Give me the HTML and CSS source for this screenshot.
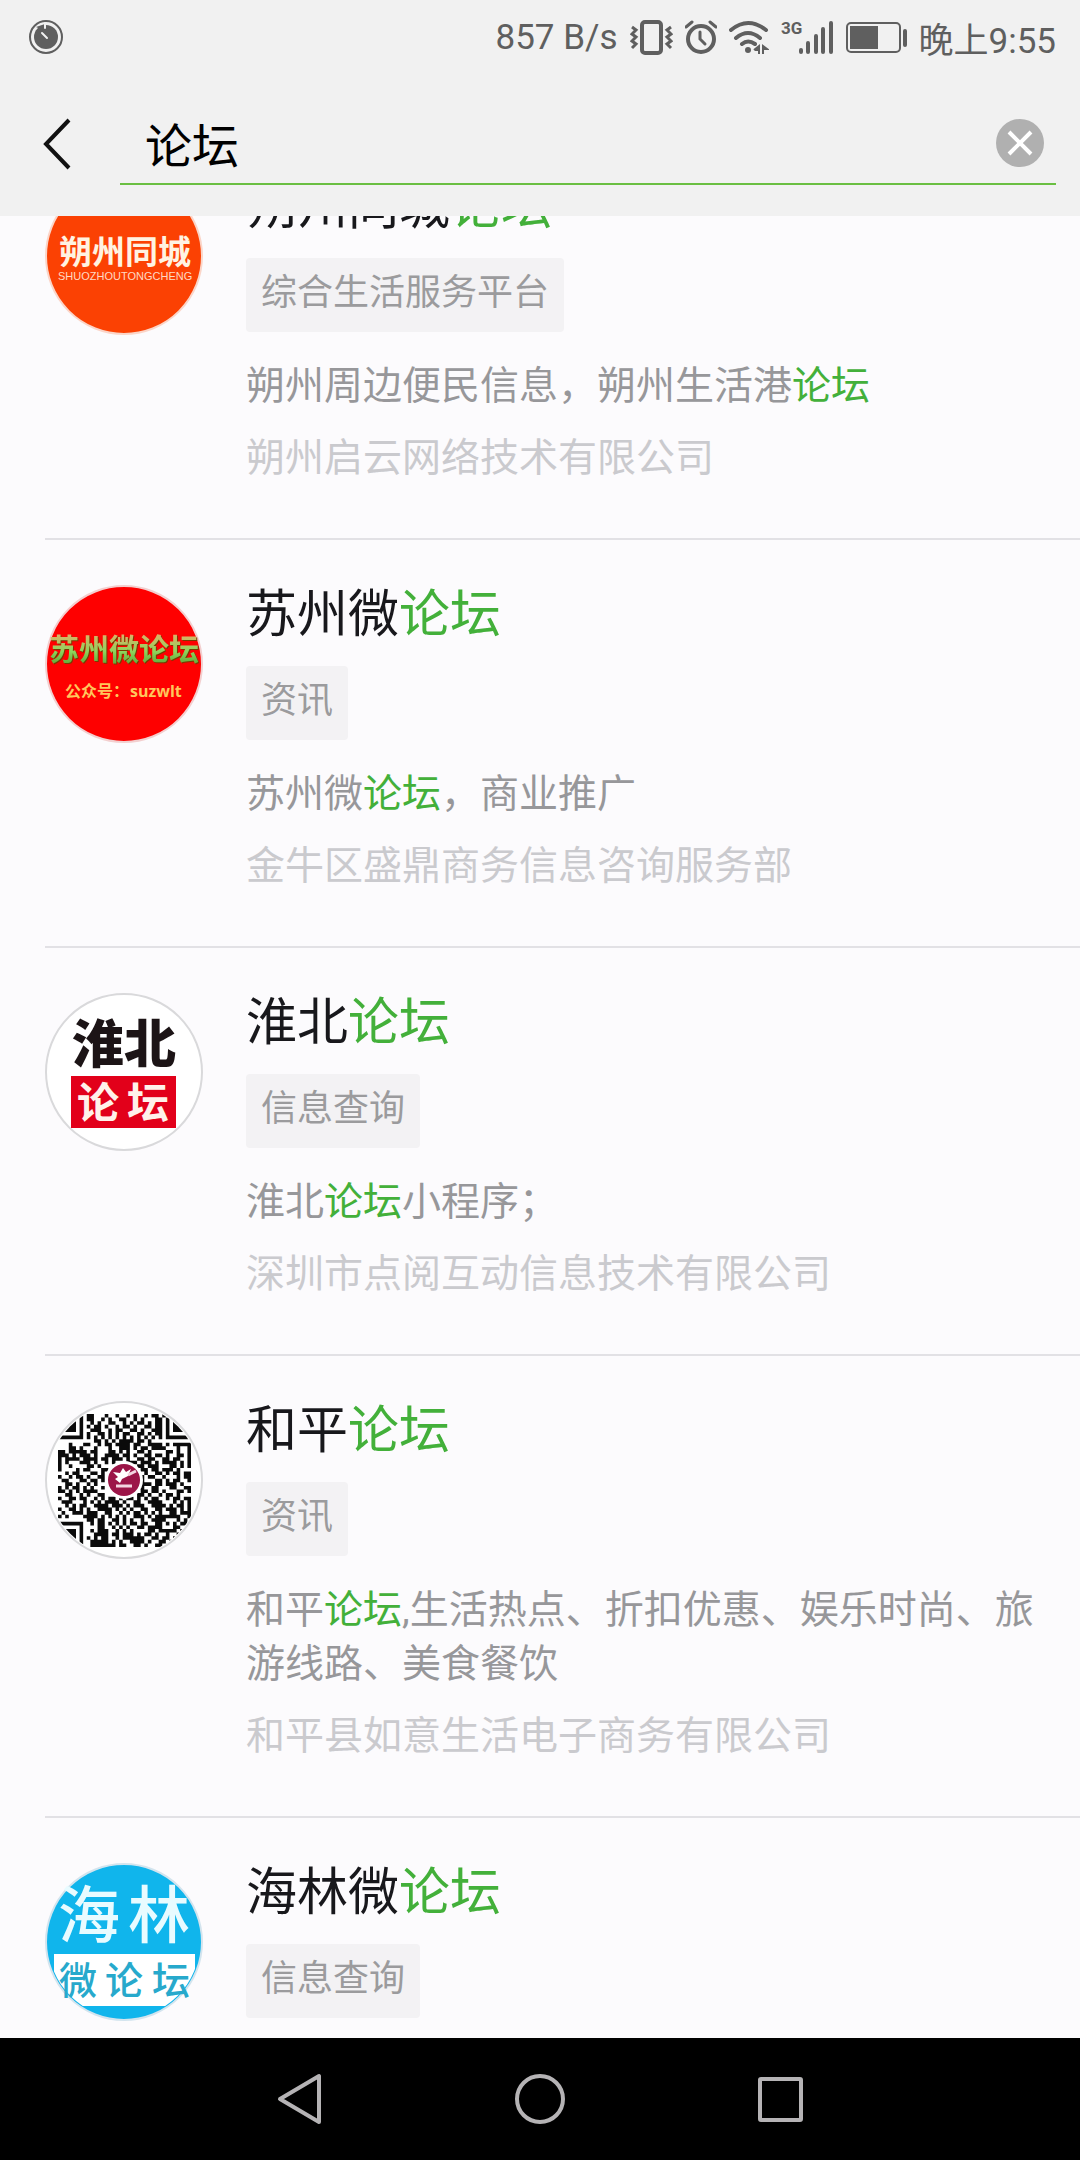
FILE: index.html
```html
<!DOCTYPE html>
<html lang="zh-CN">
<head>
    <meta charset="UTF-8">
    <meta name="viewport" content="width=device-width, initial-scale=1.0">
    <title>论坛 - 搜索</title>
    <link rel="stylesheet" href="styles.css">
</head>
<body>
    <header class="header">
        <div class="statusbar">
            <svg class="clock" width="36" height="36" viewBox="0 0 36 36">
                <circle cx="18" cy="18" r="16" fill="none" stroke="#5f5f5f" stroke-width="2"/>
                <circle cx="18" cy="18" r="12" fill="#5f5f5f"/>
                <path d="M8 8L17 5V12" fill="#5f5f5f"/>
                <path d="M17 9V4M14 14L19 19" fill="none" stroke="#f1f1f1" stroke-width="2" stroke-linecap="round"/>
            </svg>
            <span>857 B/s</span>
            <svg width="43" height="36" viewBox="0 0 43 36" fill="none" stroke="#5f5f5f">
                <rect x="12" y="3" width="19" height="31" rx="3" stroke-width="4"/>
                <path d="M2 8L6 11L2 15L6 18L2 22L6 25L2 29M41 8L37 11L41 15L37 18L41 22L37 25L41 29" stroke-width="3"/>
            </svg>
            <svg width="32" height="36" viewBox="0 0 32 36" fill="none" stroke="#5f5f5f" stroke-linecap="round">
                <circle cx="16" cy="20" r="13" stroke-width="4"/>
                <path d="M15 13V20L20 25" stroke-width="3"/>
                <path d="M1 8L7 3M31 8L25 3" stroke-width="3"/>
            </svg>
            <svg width="40" height="36" viewBox="0 0 40 36" fill="none" stroke="#5f5f5f">
                <path d="M2 11Q19 -3 37 11M7 19Q19 9 31 19M13 25Q19 20 26 25" stroke-width="4" stroke-linecap="round"/>
                <circle cx="19" cy="31" r="3" fill="#5f5f5f" stroke="none"/>
                <path d="M25 31L30 27V35M30 31H26M34 35V27L38 30H34" stroke-width="2"/>
            </svg>
            <svg width="53" height="36" viewBox="0 0 53 36">
                <text class="net" x="0" y="15">3G</text>
                <path d="M20 31V33M27 24V33M35 17V33M42 10V33M50 4V33" stroke="#5f5f5f" stroke-width="4" stroke-linecap="round"/>
            </svg>
            <svg width="61" height="36" viewBox="0 0 61 36">
                <rect x="1" y="4" width="53" height="29" rx="4" fill="none" stroke="#5f5f5f" stroke-width="2"/>
                <rect x="4" y="7" width="28" height="23" fill="#5f5f5f"/>
                <rect x="57" y="10" width="4" height="18" rx="2" fill="#5f5f5f"/>
            </svg>
            <span>晚上9:55</span>
        </div>
        <form class="searchbar">
            <button class="back" type="button" aria-label="返回">
                <svg width="30" height="54" viewBox="0 0 30 54"><path d="M27 3L4 27L27 51" fill="none" stroke="#111" stroke-width="4"/></svg>
            </button>
            <div class="searchbox">
                <input id="keyword" type="text" value="论坛" aria-label="搜索">
                <button class="clear" type="button" aria-label="清除">
                    <svg width="48" height="48" viewBox="0 0 48 48">
                        <circle cx="24" cy="24" r="24" fill="#b0b0b0"/>
                        <path d="M13 13L35 35M35 13L13 35" stroke="#fff" stroke-width="4"/>
                    </svg>
                </button>
            </div>
        </form>
    </header>

    <main class="results">
        <ul class="list">
            <li class="item">
                <svg class="avatar" viewBox="0 0 158 158">
                    <circle cx="79" cy="79" r="78" fill="#fb4103" stroke="#fbd5c8" stroke-width="2"/>
                    <text class="logo" x="14" y="87" font-size="33" fill="#fff3e2">朔州同城</text>
                    <text class="logo-en" x="13" y="103" font-size="11" fill="#ffd9c4">SHUOZHOUTONGCHENG</text>
                </svg>
                <div class="info">
                    <h2>朔州同城<em>论坛</em></h2>
                    <span class="tag">综合生活服务平台</span>
                    <p class="desc">朔州周边便民信息，朔州生活港<em>论坛</em></p>
                    <p class="company">朔州启云网络技术有限公司</p>
                </div>
            </li>
            <li class="item">
                <svg class="avatar" viewBox="0 0 158 158">
                    <defs>
                        <linearGradient id="gold" x1="0" y1="0" x2="0" y2="1">
                            <stop offset="0.2" stop-color="#e0b068"/>
                            <stop offset="0.6" stop-color="#8ed45c"/>
                            <stop offset="1" stop-color="#4f9a2c"/>
                        </linearGradient>
                    </defs>
                    <circle cx="79" cy="79" r="78" fill="#fe0000" stroke="#f3cfcf" stroke-width="2"/>
                    <text class="logo shadow" x="4" y="75" font-size="30" fill="url(#gold)">苏州微论坛</text>
                    <text class="logo" x="20" y="112" font-size="16" fill="#ffc65c">公众号：</text>
                    <text class="logo-sub" x="85" y="112" font-size="16" fill="#ffc65c">suzwlt</text>
                </svg>
                <div class="info">
                    <h2>苏州微<em>论坛</em></h2>
                    <span class="tag">资讯</span>
                    <p class="desc">苏州微<em>论坛</em>，商业推广</p>
                    <p class="company">金牛区盛鼎商务信息咨询服务部</p>
                </div>
            </li>
            <li class="item">
                <svg class="avatar" viewBox="0 0 158 158">
                    <circle cx="79" cy="79" r="78" fill="#fff" stroke="#d9d9db" stroke-width="2"/>
                    <text class="logo heavy" x="27" y="70" font-size="52" fill="#1c1416">淮北</text>
                    <rect x="26" y="83" width="105" height="52" fill="#e2001a"/>
                    <text class="logo" x="32 82" y="125" font-size="42" fill="#fff1ea">论坛</text>
                </svg>
                <div class="info">
                    <h2>淮北<em>论坛</em></h2>
                    <span class="tag">信息查询</span>
                    <p class="desc">淮北<em>论坛</em>小程序；</p>
                    <p class="company">深圳市点阅互动信息技术有限公司</p>
                </div>
            </li>
            <li class="item">
                <svg class="avatar" viewBox="0 0 158 158">
                    <defs><clipPath id="round"><circle cx="79" cy="79" r="76"/></clipPath></defs>
                    <circle cx="79" cy="79" r="78" fill="#fff" stroke="#d9d9db" stroke-width="2"/>
                    <g clip-path="url(#round)">
                        <svg x="13" y="13" width="133" height="133" viewBox="0 0 37 37"><path id="qr" fill="#0b0b0b"/></svg>
                    </g>
                    <circle cx="79" cy="79" r="19" fill="#fff"/>
                    <circle cx="79" cy="79" r="16" fill="#9c1548"/>
                    <path d="M68 71L75 72L78 67L81 71L86 68L83 75L77 78L75 82L70 78L73 76Z" fill="#fff"/>
                    <path d="M71 85H87M83 74L91 70" stroke="#f3d5e0" stroke-width="3"/>
                </svg>
                <div class="info">
                    <h2>和平<em>论坛</em></h2>
                    <span class="tag">资讯</span>
                    <p class="desc">和平<em>论坛</em>,生活热点、折扣优惠、娱乐时尚、旅游线路、美食餐饮</p>
                    <p class="company">和平县如意生活电子商务有限公司</p>
                </div>
            </li>
            <li class="item">
                <svg class="avatar" viewBox="0 0 158 158">
                    <defs><clipPath id="band"><circle cx="79" cy="79" r="76"/></clipPath></defs>
                    <circle cx="79" cy="79" r="78" fill="#10b5ec" stroke="#d3e4ee" stroke-width="2"/>
                    <rect x="9" y="91" width="141" height="52" fill="#fff" clip-path="url(#band)"/>
                    <text class="logo thin" x="13 83" y="75" font-size="62" fill="#e8fbff">海林</text>
                    <text class="logo thin" x="14 60 107" y="131" font-size="38" fill="#27a9cc">微论坛</text>
                </svg>
                <div class="info">
                    <h2>海林微<em>论坛</em></h2>
                    <span class="tag">信息查询</span>
                </div>
            </li>
        </ul>
    </main>

    <nav class="navbar">
        <button type="button" aria-label="后退">
            <svg width="52" height="52" viewBox="0 0 52 52"><path d="M6 26L45 3V49Z"/></svg>
        </button>
        <button type="button" aria-label="主页">
            <svg width="52" height="52" viewBox="0 0 52 52"><circle cx="26" cy="26" r="23"/></svg>
        </button>
        <button type="button" aria-label="最近任务">
            <svg width="52" height="52" viewBox="0 0 52 52"><rect x="6" y="6" width="41" height="41" rx="1"/></svg>
        </button>
    </nav>

    <script src="qr.js"></script>
</body>
</html>
```

FILE: styles.css
```css
*{
    box-sizing: border-box;
    margin: 0;
    padding: 0;
}
body{
    display: flex;
    flex-direction: column;
    height: 100vh;
    overflow: hidden;
    font-family: Roboto, "Noto Sans CJK SC", sans-serif;
    background-color: #fcfbfd;
    color: #18181c;
}
button{
    border: none;
    background: none;
}
svg{
    display: block;
    flex: none;
}
em{
    font-style: normal;
    color: #43b03a;
}

/* header */
.header{
    flex: none;
    background-color: #f1f1f1;
    padding-bottom: 31px;
}
.statusbar{
    display: flex;
    align-items: center;
    gap: 12px;
    height: 74px;
    padding: 0 24px 0 28px;
    font-size: 35px;
    color: #5f5f5f;
}
.clock{
    margin-right: auto;
}
.net{
    font-size: 17px;
    font-weight: bold;
    fill: #5f5f5f;
}
.searchbar{
    display: flex;
    height: 111px;
    padding-right: 24px;
}
.back{
    width: 120px;
    padding: 28px 0 0 42px;
}
.searchbox{
    flex: 1;
    display: flex;
    align-items: center;
    padding: 28px 12px 0 25px;
    border-bottom: 2px solid #6abf42;
}
.searchbox input{
    flex: 1;
    min-width: 0;
    height: 70px;
    border: none;
    outline: none;
    background: none;
    font-family: inherit;
    font-size: 47px;
    color: #000;
}

/* results, scrolled a little under the header */
.results{
    flex: 1;
    min-height: 0;
    overflow: hidden;
}
.list{
    list-style: none;
    margin-top: -84px;
    padding-left: 45px;
}
.item{
    display: flex;
    gap: 43px;
    padding: 45px 40px 53px 0;
    border-bottom: 2px solid #e2e1e5;
}
.avatar{
    width: 158px;
    height: 158px;
}
.info{
    flex: 1;
}
.info h2{
    font-size: 51px;
    font-weight: normal;
    line-height: 60px;
}
.tag{
    display: inline-block;
    vertical-align: top;
    height: 74px;
    margin-top: 21px;
    padding: 0 15px;
    border-radius: 4px;
    background-color: #f3f2f4;
    font-size: 36px;
    line-height: 70px;
    color: #9b9b9d;
}
.desc{
    margin-top: 27px;
    font-size: 39px;
    line-height: 54px;
    color: #97979a;
}
.company{
    margin-top: 18px;
    font-size: 39px;
    line-height: 54px;
    color: #cacace;
}
.logo{
    font-family: "Noto Sans CJK SC", sans-serif;
    font-weight: bold;
}
.heavy{
    font-weight: 900;
}
.thin{
    font-weight: 500;
}
.shadow{
    filter: drop-shadow(1px 1px 0 #7a3a00);
}
.logo-en{
    font-family: "Liberation Sans", sans-serif;
}
.logo-sub{
    font-family: "Open Sans", sans-serif;
    font-weight: bold;
}

/* bottom keys */
.navbar{
    flex: none;
    display: flex;
    height: 122px;
    padding: 0 180px;
    background-color: #000;
}
.navbar button{
    flex: 1;
    display: flex;
    align-items: center;
    justify-content: center;
}
.navbar svg{
    fill: none;
    stroke: #b5b3b5;
    stroke-width: 4;
    stroke-linejoin: round;
}
```

FILE: qr.js
```js
// one string per row, # is a dark module
var rows = [
    "#######.##...#..#..#.#..#.##.#.######",
    "#.....#.##..#.#..##..#.#...##.#.....#",
    "#.###.#..#.#..##..#.#.##.#.##.#.###.#",
    "#.###.#.#.##.#..#.##.#..##.##.#.###.#",
    "#.###.#..###..#.##..##.#..###.#.###.#",
    "#.....#.#..##.#.#.##..##.#.##.#.....#",
    "#######.#.#.#.#.#.#.#.#.#.#.#.#######",
    "..........##.#.#.####.##.#...........",
    "...#...##..#.##.####.##..####.#.#####",
    "...##.#...#...#..###.#.##.####...#..#",
    "##.#####.##...##.#.#..##.#....##.#..#",
    "###.#.###.#..####.##.#..##.##.#..##.#",
    "#.####.####.##.###.#..##.##..##.##..#",
    "#.#...###.#..#.#...###.###.#.####.#.#",
    "#..#....##.#..........##.###...##.#.#",
    "#....#.##...##.........##.##.###.#...",
    "..#.##...##.#...........#..##.#.##.##",
    "#..#.##.#..##..........#.##..#...#.##",
    ".##...##.##.#..........#...##.#.##..#",
    "..##.#..#.#............###.##.###.#..",
    "#.#.##.#.#..#.........##..##...##..##",
    "##.#.#.####............##.##.#...##.#",
    "..##..#.#..##.........##.#..#.##.#...",
    "#..##.##..#.#.##.#.##.#.#.##..#.##.##",
    ".###...#.#.#.####.#..##..####...#.#.#",
    "..#.#.##..####.###.#.###..####.#.##.#",
    "#..##.#.#..####.#.#.#..##..##.###.#.#",
    ".#..###.###..##..#.#.##.#.#.#..##.###",
    "#.#....####.#.#.#.#..###.#.#######..#",
    "........##.##..##.#.#..#..####...#.#.",
    "#######..#.##.#.#.#.##.##..##.#.#.##.",
    "#.....#....##..#.#.#..##.####...##..#",
    "#.###.#..#.###..#.#.#....##.#####.#..",
    "#.###.#...####.##.###.#.##.#..#..##.#",
    "#.###.#.#.#.##..#.######..##.##.#..##",
    "#.....#..#####.#.#..####.#..##.#.##..",
    "#######..#######.##..##.#..##.#..#.#."
];
var d = "";
rows.forEach(function(row, y){
    for (var x = 0; x < row.length; x++){
        if (row[x] == "#") {
            d += "M" + x + " " + y + "h1v1h-1z";
        }
    }
});
document.getElementById("qr").setAttribute("d", d);
```
